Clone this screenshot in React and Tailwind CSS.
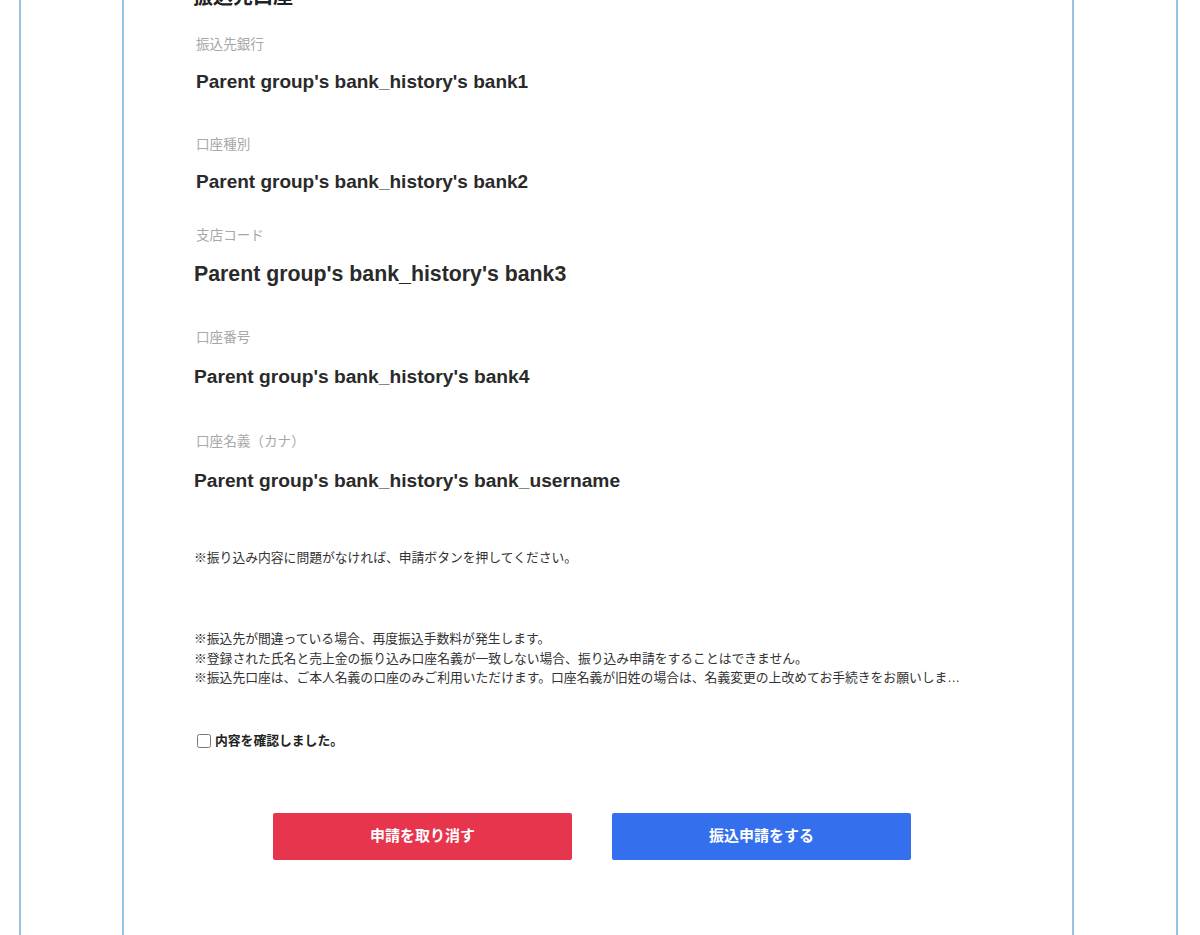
import React from 'react';

const jp = { fontFamily: '"Liberation Sans", "Noto Sans CJK JP", sans-serif' };

const fields = [
  { label: '振込先銀行', value: "Parent group's bank_history's bank1", lmt: 'mt-[24px]', vmt: 'mt-[15px]', size: 'text-[19px] ml-[3px]' },
  { label: '口座種別', value: "Parent group's bank_history's bank2", lmt: 'mt-[41px]', vmt: 'mt-[15px]', size: 'text-[19px] ml-[3px]' },
  { label: '支店コード', value: "Parent group's bank_history's bank3", lmt: 'mt-[32px]', vmt: 'mt-[16px]', size: 'text-[21.3px] ml-[1px]' },
  { label: '口座番号', value: "Parent group's bank_history's bank4", lmt: 'mt-[42px]', vmt: 'mt-[17px]', size: 'text-[19.2px] ml-[1px]' },
  { label: '口座名義（カナ）', value: "Parent group's bank_history's bank_username", lmt: 'mt-[43px]', vmt: 'mt-[17px]', size: 'text-[19.2px] ml-[1px]' },
];

const notes = [
  '※振込先が間違っている場合、再度振込手数料が発生します。',
  '※登録された氏名と売上金の振り込み口座名義が一致しない場合、振り込み申請をすることはできません。',
  '※振込先口座は、ご本人名義の口座のみご利用いただけます。口座名義が旧姓の場合は、名義変更の上改めてお手続きをお願いします。',
];

export default function App() {
  return (
    <div className="h-[935px] overflow-hidden bg-white" style={jp}>
      <div className="ml-[19px] mr-[22px] h-full border-x-2 border-[#93c4e8]">
        <div className="ml-[101px] w-[952px] h-full flow-root border-x-2 border-[#93c4e8] pl-[69px]">
          <div className="-mt-[17px]">
            <h2 className="h-[28px] leading-[28px] text-[20px] font-bold text-[#222]">振込先口座</h2>

            {fields.map((f) => (
              <div key={f.label}>
                <div className={`${f.lmt} ml-[3px] h-[20px] leading-[20px] text-[13.6px] text-[#a8a8a8]`}>{f.label}</div>
                <div className={`${f.vmt} h-[24px] leading-[24px] font-bold text-[#2a2a2a] ${f.size}`}>{f.value}</div>
              </div>
            ))}

            <p className="mt-[55px] ml-[1px] h-[20px] leading-[20px] text-[12.8px] text-[#333]">
              ※振り込み内容に問題がなければ、申請ボタンを押してください。
            </p>

            <div className="mt-[61px] ml-[1px] w-[770px] text-[12.8px] leading-[19.5px] text-[#333]">
              {notes.map((n) => (
                <p key={n} className="truncate">{n}</p>
              ))}
            </div>

            <label className="mt-[43px] flex items-center h-[20px] ml-[4px]">
              <input type="checkbox" className="w-[14px] h-[14px] mr-[4px] accent-[#555]" />
              <span className="text-[12.8px] font-bold text-[#222]">内容を確認しました。</span>
            </label>

            <div className="mt-[62px] ml-[80px] flex gap-[40px]">
              <button className="w-[299px] h-[47px] rounded-[2px] bg-[#e8354e] text-white text-[15px] font-bold">
                申請を取り消す
              </button>
              <button className="w-[299px] h-[47px] rounded-[2px] bg-[#3470ee] text-white text-[15px] font-bold">
                振込申請をする
              </button>
            </div>
          </div>
        </div>
      </div>
    </div>
  );
}
